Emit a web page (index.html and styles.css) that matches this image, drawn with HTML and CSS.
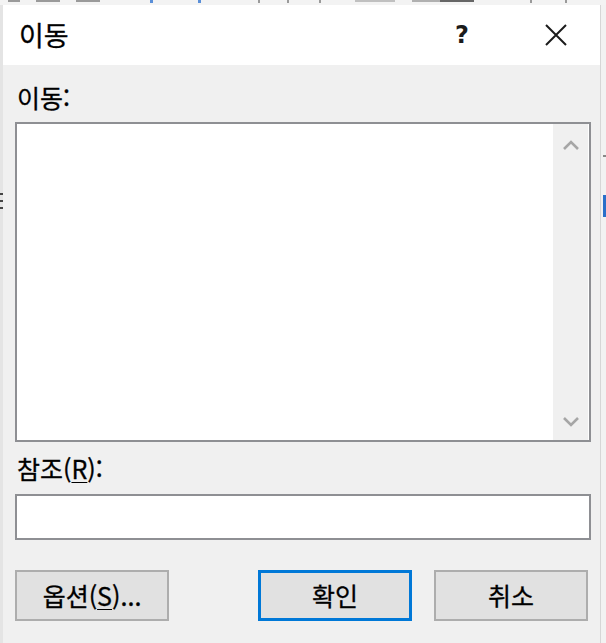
FILE: index.html
```html
<!DOCTYPE html>
<html lang="ko">
<head>
<meta charset="utf-8">
<title>이동</title>
<link rel="stylesheet" href="styles.css">
</head>
<body>
<div class="screen">
  <div class="topstrip">
    <span class="mk m1"></span><span class="mk m2"></span><span class="mk m3"></span>
    <span class="mk blue m4"></span><span class="mk blue m5"></span>
    <span class="mk m6"></span><span class="mk m7"></span><span class="mk m8"></span>
    <span class="mk m9"></span><span class="mk m10"></span><span class="mk dark m11"></span>
    <span class="mk m12"></span><span class="mk m13"></span>
  </div>
  <div class="row">
    <div class="leftstrip"><span class="dots"></span></div>
    <div class="dialog">
      <div class="titlebar">
        <span class="title">이동</span>
        <span class="help">?</span>
        <span class="close">
          <svg width="22" height="22" viewBox="0 0 22 22"><path d="M1 1 L21 21 M21 1 L1 21" stroke="#1b1b1b" stroke-width="2" fill="none"/></svg>
        </span>
      </div>
      <div class="content">
        <div class="label">이동:</div>
        <div class="listbox">
          <div class="list-area"></div>
          <div class="scrollbar">
            <svg width="18" height="12" viewBox="0 0 18 12"><path d="M2 10 L9 3 L16 10" stroke="#a6a6a6" stroke-width="2.6" fill="none"/></svg>
            <svg width="18" height="12" viewBox="0 0 18 12"><path d="M2 2 L9 9 L16 2" stroke="#a6a6a6" stroke-width="2.6" fill="none"/></svg>
          </div>
        </div>
        <div class="label label2">참조(<span class="u">R</span>):</div>
        <div class="input"></div>
        <div class="buttons">
          <button class="btn">옵션(<span class="u">S</span>)...</button>
          <button class="btn btn-default">확인</button>
          <button class="btn">취소</button>
        </div>
      </div>
    </div>
    <div class="rightstrip"><span class="rmark"></span><span class="rblue"></span></div>
  </div>
</div>
</body>
</html>
```
FILE: styles.css
```css
* { box-sizing: border-box; }
html, body { margin: 0; padding: 0; }
body {
  width: 606px;
  height: 643px;
  overflow: hidden;
  background: #ececec;
  font-family: "Noto Sans CJK KR", "Noto Sans", sans-serif;
  color: #000;
}
.screen { width: 606px; height: 643px; display: flex; flex-direction: column; }
.topstrip {
  height: 5px;
  background: #f3f3f3;
  position: relative;
  flex: none;
}
.mk { position: absolute; top: 0; height: 2px; background: #9a9a9a; }
.mk.blue { background: #5a8fd8; width: 3px; height: 3px; }
.mk.dark { background: #666; }
.m1 { left: 8px; width: 12px; }
.m2 { left: 36px; width: 24px; }
.m3 { left: 76px; width: 24px; }
.m4 { left: 150px; }
.m5 { left: 198px; }
.m6 { left: 258px; width: 2px; height: 3px; }
.m7 { left: 287px; width: 2px; height: 3px; }
.m8 { left: 319px; width: 2px; height: 3px; }
.m9 { left: 355px; width: 40px; background: #c0c0c0; }
.m10 { left: 412px; width: 30px; background: #b0b0b0; }
.m11 { left: 440px; width: 34px; height: 2px; }
.m12 { left: 530px; width: 2px; height: 3px; }
.m13 { left: 565px; width: 2px; height: 3px; }

.row { flex: 1; display: flex; }
.leftstrip {
  width: 3px;
  background: #e4e4e4;
  position: relative;
  flex: none;
}
.dots {
  position: absolute;
  left: 0;
  top: 188px;
  width: 3px;
  height: 20px;
  background: repeating-linear-gradient(#444 0 2px, transparent 2px 7px);
}
.rightstrip {
  flex: 1;
  background: #f2f2f2;
  border-left: 1px solid #d6d6d6;
  position: relative;
}
.rmark { position: absolute; left: 2px; top: 150px; width: 3px; height: 2px; background: #888; }
.rblue { position: absolute; left: 2px; top: 190px; width: 4px; height: 22px; background: #2a6fc9; }

.dialog {
  width: 597px;
  flex: none;
  display: flex;
  flex-direction: column;
  background: #f0f0f0;
}
.titlebar {
  height: 60px;
  background: #fff;
  display: flex;
  align-items: center;
  padding-left: 16px;
}
.title {
  font-size: 27px;
  line-height: 32px;
  flex: 1;
  padding-bottom: 1px;
  -webkit-text-stroke: 0.3px #000;
}
.help {
  font-family: "DejaVu Sans", sans-serif;
  font-size: 24px;
  font-weight: bold;
  width: 20px;
  margin-right: 70px;
  color: #1b1b1b;
}
.close {
  width: 22px;
  height: 22px;
  margin-right: 33px;
  display: flex;
}
.content {
  padding: 16px 9px 0 12px;
  display: flex;
  flex-direction: column;
}
.label {
  font-size: 25px;
  line-height: 32px;
  height: 32px;
  padding-left: 2px;
  -webkit-text-stroke: 0.3px #000;
}
.u { text-decoration: underline; text-underline-offset: 3px; text-decoration-thickness: 1px; }
.listbox {
  margin-top: 9px;
  height: 320px;
  border: 2px solid #8e8f93;
  background: #fff;
  display: flex;
}
.list-area { flex: 1; }
.scrollbar {
  width: 35px;
  margin-right: 1px;
  background: #f0f0f0;
  display: flex;
  flex-direction: column;
  justify-content: space-between;
  align-items: center;
  padding: 15px 0 12px;
}
.label2 { margin-top: 10px; }
.input {
  margin-top: 10px;
  height: 46px;
  border: 2px solid #8e8f93;
  background: #fff;
}
.buttons {
  margin-top: 30px;
  display: flex;
  padding-right: 3px;
}
.btn {
  width: 154px;
  height: 51px;
  background: #e1e1e1;
  border: 2px solid #adadad;
  font-family: "Noto Sans CJK KR", "Noto Sans", sans-serif;
  font-size: 25px;
  color: #000;
  padding: 0;
  line-height: 1;
  -webkit-text-stroke: 0.3px #000;
}
.btn-default {
  margin-left: 89px;
  margin-right: 22px;
  border: 3px solid #0078d7;
}
```
